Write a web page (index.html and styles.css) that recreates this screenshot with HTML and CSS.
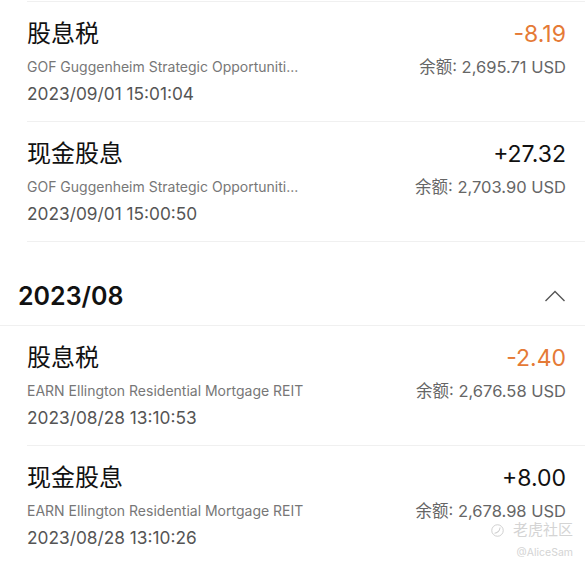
FILE: index.html
```html
<!DOCTYPE html>
<html>
<head>
    <title>资金明细</title>
    <link rel="stylesheet" href="styles.css">
</head>
<body>

<div class="page">
    <div class="top-line"></div>

    <div class="item">
        <div class="left">
            <div class="title">股息税</div>
            <div class="sub">GOF Guggenheim Strategic Opportuniti...</div>
            <div class="date">2023/09/01 15:01:04</div>
        </div>
        <div class="right">
            <div class="amount minus">-8.19</div>
            <div class="balance">余额: 2,695.71 USD</div>
        </div>
    </div>

    <div class="item">
        <div class="left">
            <div class="title">现金股息</div>
            <div class="sub">GOF Guggenheim Strategic Opportuniti...</div>
            <div class="date">2023/09/01 15:00:50</div>
        </div>
        <div class="right">
            <div class="amount">+27.32</div>
            <div class="balance">余额: 2,703.90 USD</div>
        </div>
    </div>

    <div class="month">
        <span class="month-name">2023/08</span>
        <svg class="chevron" width="22" height="12" viewBox="0 0 22 12">
            <path d="M1.5 11 L11 1.5 L20.5 11" fill="none" stroke="#555" stroke-width="1.4"/>
        </svg>
    </div>

    <div class="item">
        <div class="left">
            <div class="title">股息税</div>
            <div class="sub">EARN Ellington Residential Mortgage REIT</div>
            <div class="date">2023/08/28 13:10:53</div>
        </div>
        <div class="right">
            <div class="amount minus">-2.40</div>
            <div class="balance">余额: 2,676.58 USD</div>
        </div>
    </div>

    <div class="item">
        <div class="left">
            <div class="title">现金股息</div>
            <div class="sub">EARN Ellington Residential Mortgage REIT</div>
            <div class="date">2023/08/28 13:10:26</div>
        </div>
        <div class="right">
            <div class="amount">+8.00</div>
            <div class="balance">余额: 2,678.98 USD</div>
        </div>
    </div>
</div>

<div class="watermark">
    <div class="wm-brand">
        <svg class="wm-logo" width="13" height="13" viewBox="0 0 14 14">
            <circle cx="7" cy="7" r="6.2" fill="none" stroke="#ccc" stroke-width="1"/>
            <path d="M3.8 10 C6.5 10 9.5 7.5 9.8 3.8" fill="none" stroke="#ccc" stroke-width="1.1"/>
        </svg>
        <span>老虎社区</span>
    </div>
    <div class="wm-user">@AliceSam</div>
</div>

</body>
</html>
```

FILE: styles.css
```css
body {
    margin: 0;
    background-color: #fff;
    font-family: "Inter", "Noto Sans CJK SC", sans-serif;
    color: #1a1a1a;
}
.page {
    padding-top: 1px;
}
.top-line {
    margin-left: 27px;
    border-top: 1px solid #f0f0f0;
}
.item {
    display: flex;
    justify-content: space-between;
    margin-left: 27px;
    padding: 16px 19px 15px 0;
    border-bottom: 1px solid #f0f0f0;
}
.title {
    font-size: 24px;
    line-height: 32px;
    color: #111;
}
.sub {
    margin-top: 6px;
    font-size: 14px;
    line-height: 22px;
    color: #777;
}
.date {
    margin-top: 4px;
    font-size: 17.3px;
    line-height: 24px;
    color: #555;
}
.right {
    text-align: right;
}
.amount {
    font-size: 23px;
    line-height: 32px;
    color: #111;
}
.amount.minus {
    color: #e57a36;
}
.balance {
    margin-top: 6px;
    font-size: 16.5px;
    line-height: 22px;
    color: #666;
}
.month {
    display: flex;
    justify-content: space-between;
    align-items: center;
    padding: 38px 19px 13px 18px;
    border-bottom: 1px solid #f0f0f0;
}
.month-name {
    font-size: 25px;
    line-height: 32px;
    font-weight: 600;
    color: #111;
}
.watermark {
    position: absolute;
    right: 12px;
    top: 520px;
    text-align: right;
    color: #d4d4d4;
}
.wm-brand {
    display: flex;
    align-items: center;
    gap: 9px;
    font-size: 15px;
    line-height: 20px;
}
.wm-user {
    margin-top: 6px;
    font-size: 10.5px;
    line-height: 13px;
}
```
